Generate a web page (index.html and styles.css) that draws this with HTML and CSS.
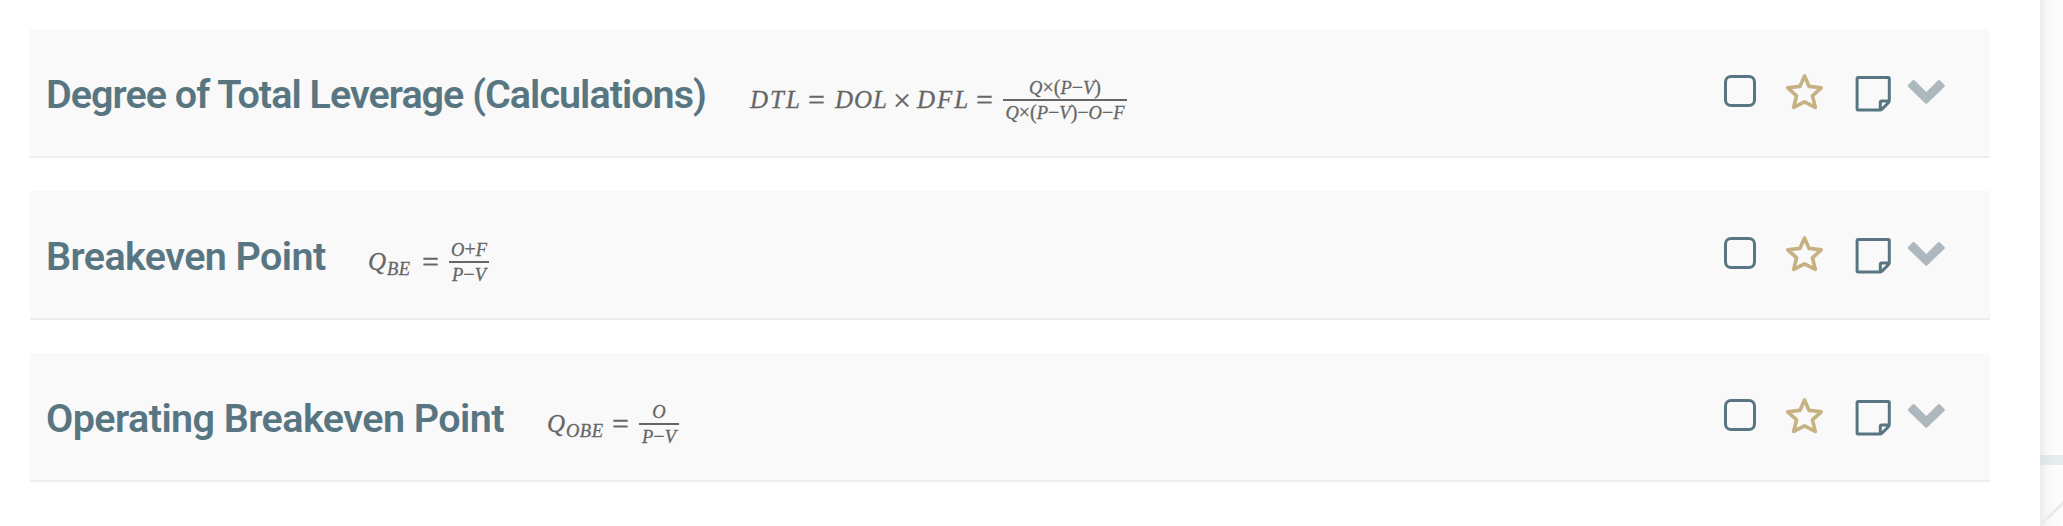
FILE: index.html
```html
<!DOCTYPE html>
<html lang="en">
<head>
<meta charset="utf-8">
<title>Formulas</title>
<link rel="stylesheet" href="styles.css">
</head>
<body>
<svg class="defs" width="0" height="0">
  <symbol id="tools" viewBox="0 0 230 50">
    <g fill="none" stroke="#587682" stroke-width="3">
      <rect x="5.5" y="6.5" width="29" height="29" rx="5.5"/>
      <path d="M138.8 7.6H168.3Q169.3 7.6 169.3 8.6V30.5Q169.3 31.8 168.4 32.7L162 39.1Q161.1 40 159.8 40H138.3Q137.1 40 137.1 39V8.6Q137.1 7.6 138.3 7.6ZM160.3 39.5V32.4Q160.3 31 161.7 31H169"/>
    </g>
    <path d="M84.5 6L89.1 16.4L101.2 17.8L92.4 25.8L95.3 37.4L84.5 31.8L73.7 37.4L76.6 25.8L67.8 17.8L79.9 16.4Z" fill="none" stroke="#c5b181" stroke-width="3.6" stroke-linejoin="round"/>
    <path d="M188.3 14.8L192.5 10.6Q193.6 9.5 194.7 10.6L206.3 21.9L217.9 10.6Q219 9.5 220.1 10.6L224.3 14.8Q225.4 15.9 224.3 17L207.4 33.2Q206.3 34.2 205.2 33.2L188.3 17Q187.2 15.9 188.3 14.8Z" fill="#adb8be"/>
  </symbol>
</svg>
<div class="page">
  <main class="panel">
    <section class="card">
      <h2 class="title total">Degree of Total Leverage (Calculations)</h2>
      <div class="formula">
        <span class="word dtl">DTL</span><span class="eq">=</span><span class="word dol">DOL</span><span class="times">×</span><span class="word dfl">DFL</span><span class="eq">=</span>
        <span class="fraction wide"><span class="num">Q<b>×(</b>P<b>−</b>V<b>)</b></span><span class="den">Q<b>×(</b>P<b>−</b>V<b>)−</b>O<b>−</b>F</span></span>
      </div>
      <svg class="tools"><use href="#tools"/></svg>
    </section>
    <section class="card">
      <h2 class="title breakeven">Breakeven Point</h2>
      <div class="formula">
        <span class="word q">Q</span><span class="sub be">BE</span><span class="eq">=</span>
        <span class="fraction"><span class="num">O<b>+</b>F</span><span class="den">P<b>−</b>V</span></span>
      </div>
      <svg class="tools"><use href="#tools"/></svg>
    </section>
    <section class="card">
      <h2 class="title operating">Operating Breakeven Point</h2>
      <div class="formula">
        <span class="word q">Q</span><span class="sub obe">OBE</span><span class="eq">=</span>
        <span class="fraction"><span class="num">O</span><span class="den">P<b>−</b>V</span></span>
      </div>
      <svg class="tools"><use href="#tools"/></svg>
    </section>
  </main>
  <aside class="edge">
    <div class="rule"></div>
    <svg class="diagonal" width="23" height="61" viewBox="0 0 23 61"><path d="M2 58.5L25 36" stroke="#e6ebec" stroke-width="3"/></svg>
  </aside>
</div>
</body>
</html>
```

FILE: styles.css
```css
* { box-sizing: border-box; }
body { margin: 0; background: #fff; overflow: hidden; }
.defs { display: block; position: absolute; }
.page { display: flex; width: 2063px; height: 526px; }
.panel {
  width: 2040px;
  padding: 29px 50px 0 30px;
  display: flex;
  flex-direction: column;
  gap: 33px;
  background: #fff;
}
.card {
  display: flex;
  height: 129px;
  padding-left: 16px;
  background: #f9f9f9;
  border-bottom: 2px solid #eee;
}
.title {
  margin: 0;
  padding-top: 42px;
  font: 600 39.5px/48px Roboto, sans-serif;
  color: #587682;
  white-space: nowrap;
  flex: none;
}
.total { width: 704px; letter-spacing: -0.97px; }
.breakeven { width: 322px; letter-spacing: -0.6px; }
.operating { width: 501px; letter-spacing: -0.56px; }
.formula {
  display: flex;
  height: 60px;
  margin-top: 41px;
  font: italic 25px/60px "Liberation Serif", serif;
  color: #666;
  -webkit-text-stroke: 0.3px #666;
  white-space: nowrap;
}
.word { flex: none; }
.dtl { width: 58px; letter-spacing: 2px; }
.dol { width: 58px; letter-spacing: 1px; }
.dfl { width: 59px; letter-spacing: 2px; }
.q { width: 19px; }
.eq { width: 27px; font-style: normal; font-size: 30px; flex: none; }
.times { width: 24px; font-style: normal; font-size: 32px; flex: none; }
.sub { font-size: 18.5px; padding-top: 7px; letter-spacing: 0.5px; flex: none; }
.be { width: 35px; }
.obe { width: 46px; }
.fraction {
  width: 40px;
  height: 50px;
  margin-top: 4px;
  font-size: 18.5px;
  line-height: 23px;
  text-align: center;
  flex: none;
}
.wide { width: 124px; }
.fraction b { font-weight: 400; font-style: normal; font-size: 20px; line-height: 1; }
.num, .den { display: block; }
.num { height: 27px; padding-top: 3px; border-bottom: 2px solid #666; }
.den { height: 23px; padding-top: 1px; }
.tools { width: 230px; height: 50px; margin: 41px 40px 0 auto; flex: none; }
.edge {
  width: 23px;
  padding-top: 455px;
  background: linear-gradient(90deg, #ebebeb, #f5f5f5 25%, #fafafa 55%, #fdfdfd);
}
.rule { height: 10px; background: linear-gradient(90deg, #dde2e4, #e6ebed 60%); }
.diagonal { display: block; }
```
